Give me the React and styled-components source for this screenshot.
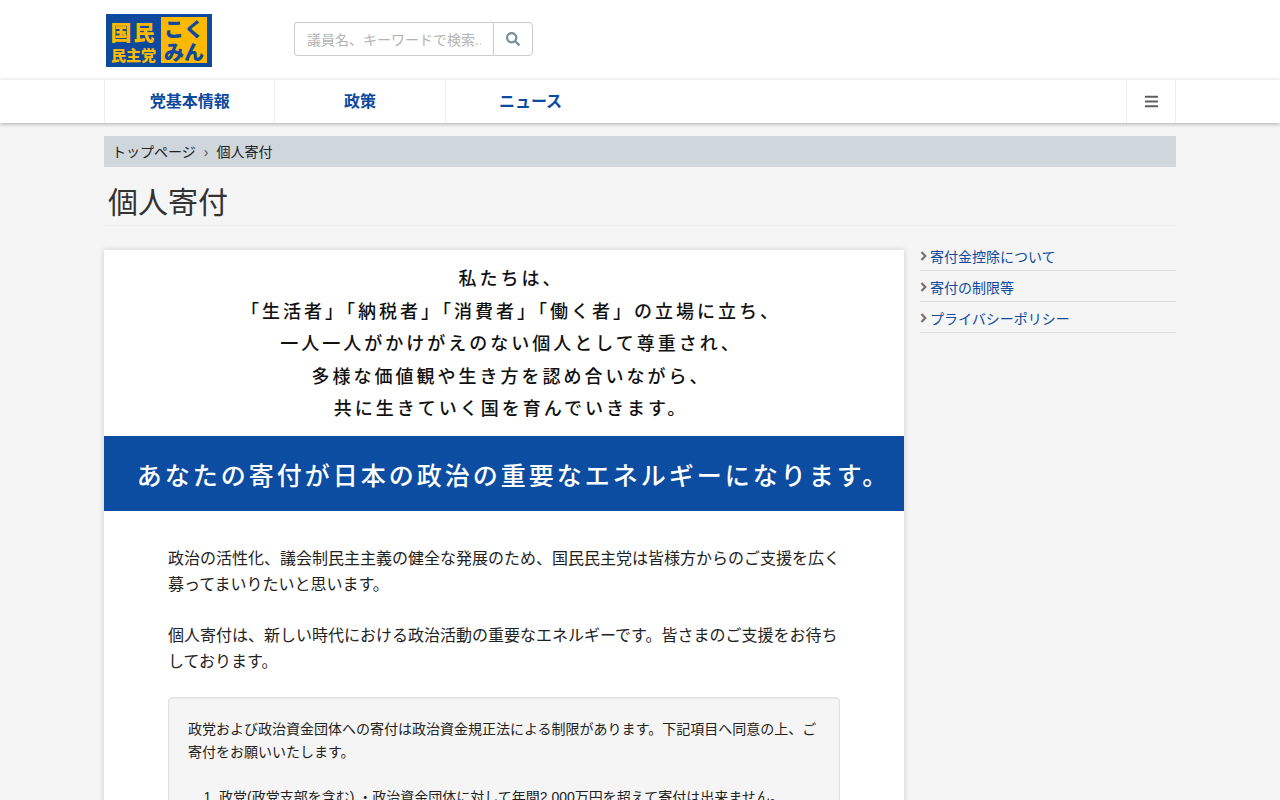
import React from 'react';
import styled, {createGlobalStyle} from 'styled-components';
import {FaSearch, FaBars} from 'react-icons/fa';

const GlobalStyle = createGlobalStyle`
    html, body {
        margin: 0;
        height: 800px;
        overflow: hidden;
    }
    body {
        background: #f5f5f5;
        color: #222;
        font-family: "Liberation Sans", "Noto Sans CJK JP", sans-serif;
        font-size: 14px;
    }
    * {
        box-sizing: border-box;
    }
`;

const Container = styled.div`
    width: 1072px;
    margin: 0 auto;
`;

const Header = styled.header`
    height: 80px;
    background: #fff;
    box-shadow: 0 0 3px rgba(0, 0, 0, .12);
`;
const HeaderInner = styled(Container)`
    display: flex;
    align-items: flex-start;
    padding: 14px 0 0 2px;
`;

const Logo = styled.a`
    display: flex;
    flex: none;
    width: 106px;
    height: 53px;
    padding: 3px 5px 4px 5px;
    gap: 5px;
    background: #0d4a9e;
    text-decoration: none;
    font-family: "Noto Sans CJK JP", sans-serif;
    font-weight: 900;
    white-space: nowrap;
`;
const LogoLeft = styled.span`
    display: flex;
    flex: none;
    flex-direction: column;
    align-items: center;
    width: 45px;
    padding-top: 3px;
    color: #fcb900;
`;
const LogoBig = styled.span`
    font-size: 21px;
    line-height: 23px;
    letter-spacing: 2px;
`;
const LogoSmall = styled.span`
    font-size: 15px;
    line-height: 20px;
    margin-top: 2px;
`;
const LogoRight = styled.span`
    display: flex;
    flex: none;
    flex-direction: column;
    align-items: center;
    justify-content: center;
    width: 46px;
    height: 46px;
    background: #fcb900;
    color: #0d4a9e;
    font-size: 20px;
    line-height: 23px;
`;

const Search = styled.form`
    display: flex;
    margin: 8px 0 0 82px;
    height: 34px;
`;
const SearchInput = styled.input`
    width: 199px;
    padding: 2px 12px 0;
    border: 1px solid #ccc;
    border-right: 0;
    border-radius: 4px 0 0 4px;
    font: 14px "Liberation Sans", "Noto Sans CJK JP", sans-serif;
    &::placeholder {
        color: #b3b3b3;
    }
`;
const SearchButton = styled.button`
    display: flex;
    align-items: center;
    justify-content: center;
    width: 40px;
    padding: 0;
    background: #fff;
    border: 1px solid #ccc;
    border-radius: 0 4px 4px 0;
    color: #78909c;
    font-size: 14px;
`;

const Nav = styled.nav`
    height: 43px;
    background: #fff;
    box-shadow: 0 1px 4px rgba(0, 0, 0, .3);
    position: relative;
`;
const NavInner = styled(Container)`
    display: flex;
    height: 100%;
`;
const NavItem = styled.a`
    display: flex;
    align-items: center;
    justify-content: center;
    width: 170.4px;
    padding-bottom: 3px;
    border-left: 1px solid #eee;
    color: #0d4a9e;
    font-size: 16px;
    font-weight: 700;
    text-decoration: none;
`;
const NavToggle = styled.a`
    display: flex;
    align-items: center;
    justify-content: center;
    width: 50px;
    margin-left: auto;
    border-left: 1px solid #eee;
    border-right: 1px solid #eee;
    color: #5f5f5f;
    font-size: 15px;
`;

const Breadcrumb = styled.ol`
    display: flex;
    align-items: center;
    height: 31px;
    margin: 13px 0 0;
    padding: 0 8px 2px;
    list-style: none;
    background: #cfd6dc;
    color: #222;
`;
const Crumb = styled.li`
    & + &::before {
        content: "›";
        margin: 0 8px;
        color: #555;
    }
`;

const Title = styled.h1`
    margin: 0 0 24px;
    padding: 16px 4px 3px;
    height: 59px;
    border-bottom: 1px solid #eee;
    color: #333;
    font-size: 30px;
    font-weight: 400;
    line-height: 40px;
`;

const Columns = styled.div`
    display: flex;
    align-items: flex-start;
    gap: 16px;
`;

const Card = styled.main`
    width: 800px;
    background: #fff;
    box-shadow: 0 0 6px rgba(0, 0, 0, .16);
`;
const Lead = styled.div`
    padding: 11px 0 12px 14px;
    text-align: center;
    color: #111;
    font-family: "Noto Sans CJK JP", sans-serif;
    font-size: 18px;
    font-weight: 500;
    line-height: 32.5px;
    letter-spacing: 3px;
`;
const Banner = styled.div`
    height: 75px;
    padding-left: 19px;
    background: #0d4da1;
    color: #fff;
    font-family: "Noto Sans CJK JP", sans-serif;
    font-size: 25px;
    font-weight: 500;
    line-height: 77px;
    letter-spacing: 3px;
    text-align: center;
    white-space: nowrap;
`;
const Body = styled.div`
    padding: 35px 64px 0;
    font-size: 16px;
    line-height: 26px;
`;
const Para = styled.p`
    margin: 0 0 25px;
    &:last-of-type {
        margin-bottom: 22.5px;
    }
`;
const Notice = styled.div`
    min-height: 200px;
    padding: 20px 19px 19px;
    background: #f5f5f5;
    border: 1px solid #e3e3e3;
    border-radius: 4px;
    box-shadow: inset 0 1px 1px rgba(0, 0, 0, .05);
    font-size: 14px;
    line-height: 23px;
`;
const NoticeText = styled.p`
    margin: 0 0 22px;
`;
const NoticeList = styled.ol`
    margin: 0;
    padding-left: 31px;
`;

const Side = styled.aside`
    width: 256px;
`;
const SideList = styled.div`
    margin-top: -10px;
`;
const SideLink = styled.a`
    display: flex;
    align-items: center;
    gap: 3px;
    height: 31px;
    padding-top: 1px;
    border-bottom: 1px solid #ddd;
    color: #0d4a9e;
    text-decoration: none;
`;
const Chevron = styled.svg`
    flex: none;
    width: 7px;
    height: 10px;
    fill: none;
    stroke: #78716c;
    stroke-width: 2.2;
`;

const navItems = ['党基本情報', '政策', 'ニュース'];
const sideItems = ['寄付金控除について', '寄付の制限等', 'プライバシーポリシー'];

export default function App() {
    return (
        <>
            <GlobalStyle />
            <Header>
                <HeaderInner>
                    <Logo href="#">
                        <LogoLeft>
                            <LogoBig>国民</LogoBig>
                            <LogoSmall>民主党</LogoSmall>
                        </LogoLeft>
                        <LogoRight>
                            <span>こく</span>
                            <span>みん</span>
                        </LogoRight>
                    </Logo>
                    <Search>
                        <SearchInput placeholder="議員名、キーワードで検索.." />
                        <SearchButton type="button"><FaSearch /></SearchButton>
                    </Search>
                </HeaderInner>
            </Header>
            <Nav>
                <NavInner>
                    {navItems.map(item => <NavItem href="#" key={item}>{item}</NavItem>)}
                    <NavToggle href="#"><FaBars /></NavToggle>
                </NavInner>
            </Nav>
            <Container>
                <Breadcrumb>
                    <Crumb>トップページ</Crumb>
                    <Crumb>個人寄付</Crumb>
                </Breadcrumb>
                <Title>個人寄付</Title>
                <Columns>
                    <Card>
                        <Lead>
                            私たちは、<br />
                            「生活者」「納税者」「消費者」「働く者」の立場に立ち、<br />
                            一人一人がかけがえのない個人として尊重され、<br />
                            多様な価値観や生き方を認め合いながら、<br />
                            共に生きていく国を育んでいきます。
                        </Lead>
                        <Banner>あなたの寄付が日本の政治の重要なエネルギーになります。</Banner>
                        <Body>
                            <Para>政治の活性化、議会制民主主義の健全な発展のため、国民民主党は皆様方からのご支援を広く募ってまいりたいと思います。</Para>
                            <Para>個人寄付は、新しい時代における政治活動の重要なエネルギーです。皆さまのご支援をお待ちしております。</Para>
                            <Notice>
                                <NoticeText>政党および政治資金団体への寄付は政治資金規正法による制限があります。下記項目へ同意の上、ご寄付をお願いいたします。</NoticeText>
                                <NoticeList>
                                    <li>政党(政党支部を含む) ・政治資金団体に対して年間2,000万円を超えて寄付は出来ません。</li>
                                </NoticeList>
                            </Notice>
                        </Body>
                    </Card>
                    <Side>
                        <SideList>
                            {sideItems.map(item => (
                                <SideLink href="#" key={item}>
                                    <Chevron viewBox="0 0 7 10"><path d="M1.5 1l3.8 4-3.8 4" /></Chevron>
                                    {item}
                                </SideLink>
                            ))}
                        </SideList>
                    </Side>
                </Columns>
            </Container>
        </>
    );
}
